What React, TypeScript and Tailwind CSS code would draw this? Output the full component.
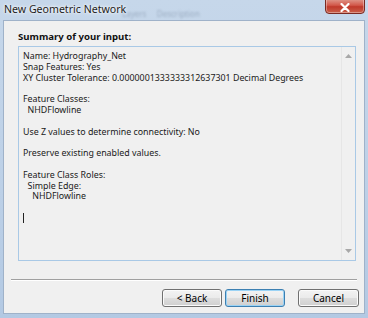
import React from "react";

const lines = [
  "Name: Hydrography_Net",
  "Snap Features: Yes",
  "XY Cluster Tolerance: 0.0000001333333312637301 Decimal Degrees",
  "",
  "Feature Classes:",
  "  NHDFlowline",
  "",
  "Use Z values to determine connectivity: No",
  "",
  "Preserve existing enabled values.",
  "",
  "Feature Class Roles:",
  "  Simple Edge:",
  "    NHDFlowline",
  "",
];

function Btn({ label, primary }: { label: string; primary?: boolean }) {
  return (
    <button
      className={
        "h-[18px] rounded-[3px] border text-[10px] leading-none text-black bg-[linear-gradient(#f3f3f3_0%,#ebebeb_48%,#dddddd_52%,#cfcfcf_100%)] " +
        (primary
          ? "border-[#3c7fb1] shadow-[inset_0_0_0_1px_#9bd3f5]"
          : "border-[#707070] shadow-[inset_0_0_0_1px_#fbfbfb]")
      }
      style={{ width: label === "Cancel" ? 61 : 60 }}
    >
      {label}
    </button>
  );
}

export default function App() {
  return (
    <div
      className="w-[368px] h-[318px] flex flex-col overflow-hidden bg-[linear-gradient(180deg,#c6d7ea_0%,#bcd0e7_60%,#b3c9e3_100%)]"
      style={{ fontFamily: '"Noto Sans", "Open Sans", sans-serif' }}
    >
      {/* title bar */}
      <div className="relative h-[20px] flex items-start shrink-0">
        <span className="pl-[4px] pt-[3px] text-[10.6px] leading-[12px] text-[#1b1b1b] [text-shadow:0_0_4px_#ffffff,0_0_2px_#ffffff]">
          New Geometric Network
        </span>
        <span className="absolute left-[122px] top-[10px] text-[8px] leading-none text-[#5d6f86] opacity-40 blur-[1px]">
          Layers&nbsp;&nbsp;&nbsp;&nbsp;&nbsp;Description
        </span>
        <div className="absolute left-[325px] top-[-2px] w-[40px] h-[16px] rounded-b-[4px] border border-[#7a2a22] bg-[linear-gradient(#e09a8e_0%,#d2584a_45%,#c0392b_55%,#c9604a_100%)] flex items-center justify-center shadow-[inset_0_0_0_1px_rgba(255,255,255,0.35)]">
          <svg width="10" height="9" viewBox="0 0 10 9" className="mt-[2px]">
            <path d="M1.5 1 L8.5 8 M8.5 1 L1.5 8" stroke="#ffffff" strokeWidth="2.2" strokeLinecap="round" />
          </svg>
        </div>
      </div>

      {/* client area */}
      <div className="mx-[3px] mb-[4px] flex-1 flex flex-col bg-[#f0f0f0] border border-[#9fb2c9]">
        <div className="pl-[14px] pr-[8px] pt-[10px]">
          <div className="text-[9.6px] font-bold leading-[12px] text-[#111]">Summary of your input:</div>
          <div className="mt-[3px] h-[215px] flex border border-[#a9c9e6] bg-[#f0f0f0]">
            <div className="flex-1 pl-[4px] pt-[4px] text-[8.85px] leading-[10.8px] text-[#1a1a1a] whitespace-pre">
              {lines.map((l, i) => (
                <div key={i} className="h-[10.8px]">
                  {l}
                </div>
              ))}
              <div className="h-[10.8px] flex items-center">
                <div className="w-px h-[10px] bg-[#222]" />
              </div>
            </div>
            <div className="w-[14px] flex flex-col justify-between items-center border-l border-[#e6e6e6] py-[7px]">
              <svg width="7" height="4" viewBox="0 0 7 4">
                <path d="M0 4 L3.5 0 L7 4 Z" fill="#a8a8a8" />
              </svg>
              <svg width="7" height="4" viewBox="0 0 7 4">
                <path d="M0 0 L3.5 4 L7 0 Z" fill="#a8a8a8" />
              </svg>
            </div>
          </div>
        </div>
        <div className="mt-[18px] mx-[7px] border-t border-[#a0a0a0] border-b border-b-[#ffffff]" />
        <div className="mt-[8px] pr-[5px] flex justify-end gap-[3px]">
          <Btn label="< Back" />
          <Btn label="Finish" primary />
          <div className="w-[7px]" />
          <Btn label="Cancel" />
        </div>
      </div>
    </div>
  );
}
